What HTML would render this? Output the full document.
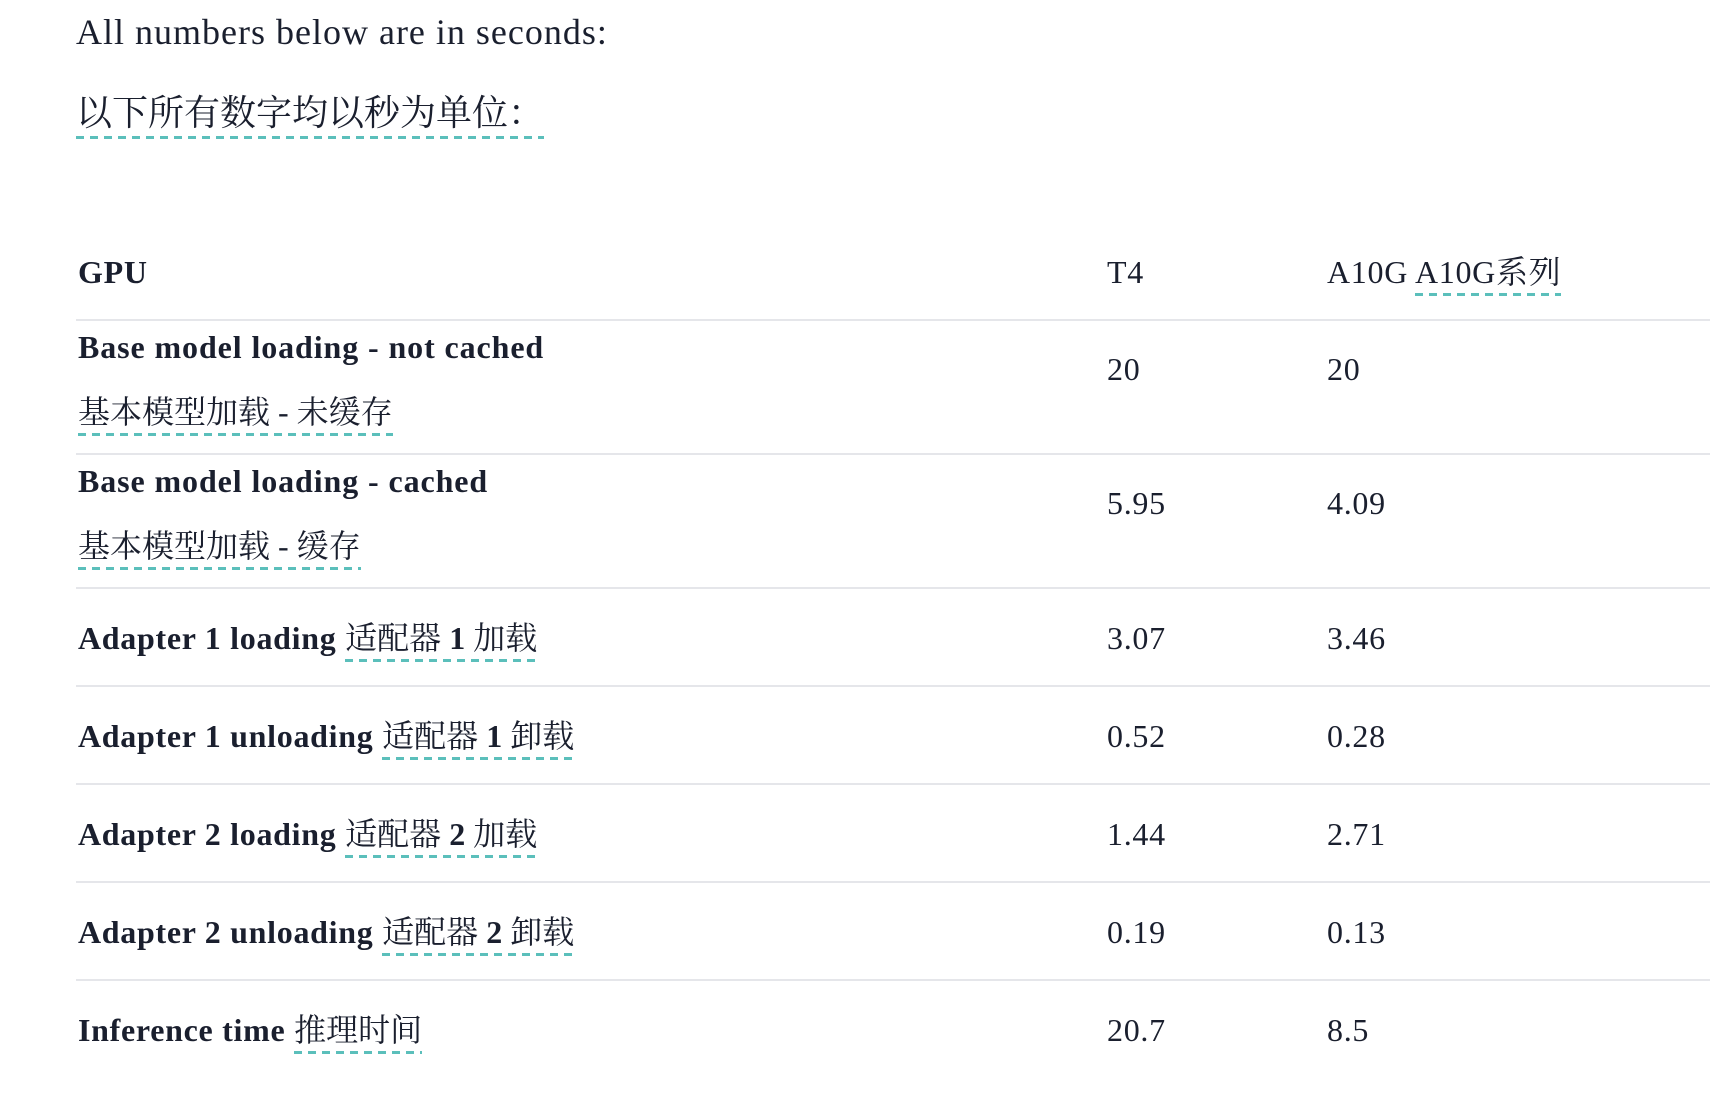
<!DOCTYPE html>
<html><head><meta charset="utf-8"><style>
html,body{margin:0;padding:0;background:#fff;width:1710px;height:1112px;overflow:hidden}
body{font-family:"Liberation Serif","Noto Serif CJK SC",serif;color:#1a1f2e;font-size:32px;letter-spacing:0.7px}
.t{position:absolute;white-space:nowrap;line-height:40px;transform:translateY(-50%)}
.p{font-size:36px;letter-spacing:1px}
.c{letter-spacing:0}
.b{font-weight:bold}
.u{padding-bottom:6px;background-image:repeating-linear-gradient(90deg,#5bbfbb 0 8px,transparent 8px 14px);background-size:100% 3px;background-repeat:no-repeat;background-position:0 100%}
.l{position:absolute;left:76px;right:0;height:2px;background:#e5e6ea}
</style></head><body>
<div class="t p" style="left:76px;top:32px">All numbers below are in seconds:</div>
<div class="t p c" style="left:76px;top:113px"><span class="u">以下所有数字均以秒为单位：</span></div>

<div class="t b" style="left:78px;top:272px">GPU</div>
<div class="t" style="left:1107px;top:272px">T4</div>
<div class="t" style="left:1327px;top:272px">A10G <span class="u">A10G系列</span></div>
<div class="l" style="top:319px"></div>

<div class="t b" style="left:78px;top:347px;letter-spacing:0.9px">Base model loading - not cached</div>
<div class="t c" style="left:78px;top:412px"><span class="u">基本模型加载 - 未缓存</span></div>
<div class="t" style="left:1107px;top:369px">20</div>
<div class="t" style="left:1327px;top:369px">20</div>
<div class="l" style="top:453px"></div>

<div class="t b" style="left:78px;top:481px;letter-spacing:0.9px">Base model loading - cached</div>
<div class="t c" style="left:78px;top:546px"><span class="u">基本模型加载 - 缓存</span></div>
<div class="t" style="left:1107px;top:503px">5.95</div>
<div class="t" style="left:1327px;top:503px">4.09</div>
<div class="l" style="top:587px"></div>

<div class="t" style="left:78px;top:638px"><b>Adapter 1 loading</b> <span class="u c">适配器 <b>1</b> 加载</span></div>
<div class="t" style="left:1107px;top:638px">3.07</div>
<div class="t" style="left:1327px;top:638px">3.46</div>
<div class="l" style="top:685px"></div>

<div class="t" style="left:78px;top:736px"><b>Adapter 1 unloading</b> <span class="u c">适配器 <b>1</b> 卸载</span></div>
<div class="t" style="left:1107px;top:736px">0.52</div>
<div class="t" style="left:1327px;top:736px">0.28</div>
<div class="l" style="top:783px"></div>

<div class="t" style="left:78px;top:834px"><b>Adapter 2 loading</b> <span class="u c">适配器 <b>2</b> 加载</span></div>
<div class="t" style="left:1107px;top:834px">1.44</div>
<div class="t" style="left:1327px;top:834px">2.71</div>
<div class="l" style="top:881px"></div>

<div class="t" style="left:78px;top:932px"><b>Adapter 2 unloading</b> <span class="u c">适配器 <b>2</b> 卸载</span></div>
<div class="t" style="left:1107px;top:932px">0.19</div>
<div class="t" style="left:1327px;top:932px">0.13</div>
<div class="l" style="top:979px"></div>

<div class="t" style="left:78px;top:1030px"><b>Inference time</b> <span class="u c">推理时间</span></div>
<div class="t" style="left:1107px;top:1030px">20.7</div>
<div class="t" style="left:1327px;top:1030px">8.5</div>
</body></html>
